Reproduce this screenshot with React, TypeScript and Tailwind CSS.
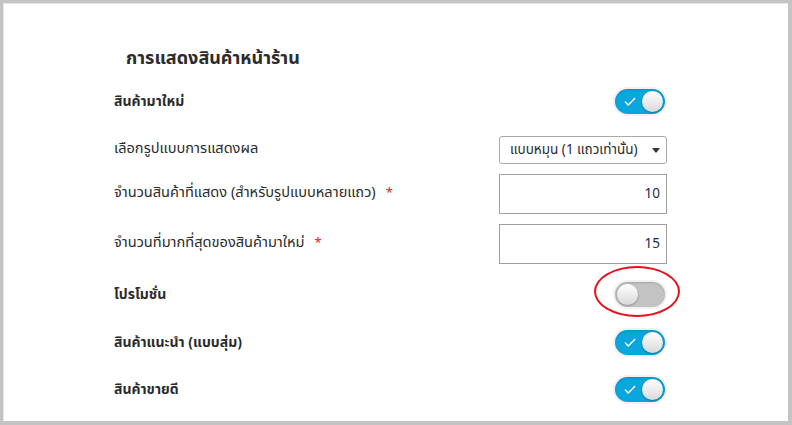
import { useState } from 'react';
import { Check } from 'lucide-react';

function Toggle({ on, circled = false }: { on: boolean; circled?: boolean }) {
  return (
    <div className="relative">
      {circled && (
        <div className="pointer-events-none absolute left-[-19px] top-[-14px] h-[51px] w-[86px] rounded-[50%] border-[2.5px] border-[#e8101a]" />
      )}
      <div className="rounded-full bg-[#f1f1f1] p-[2px]">
        <div
          className={`relative h-[25px] w-[50px] rounded-full shadow-[inset_0_1px_2px_rgba(0,0,0,0.15)] ${
            on ? 'bg-[#0aa6dc]' : 'bg-[#c3c3c3]'
          }`}
        >
          {on && <Check size={14} strokeWidth={2.5} className="absolute left-[8px] top-[6px] text-white" />}
          <div
            className={`absolute top-[2px] h-[21px] w-[21px] rounded-full bg-gradient-to-b from-[#ffffff] to-[#d9d9d9] shadow-[0_1px_2px_rgba(0,0,0,0.3)] ${
              on ? 'left-[27px]' : 'left-[2px]'
            }`}
          />
        </div>
      </div>
    </div>
  );
}

function Row({ label, bold = false, required = false, children, h }: { label: string; bold?: boolean; required?: boolean; children: React.ReactNode; h: string }) {
  return (
    <div className={`flex items-center justify-between ${h}`}>
      <div className={`text-[#2b2b2b] ${bold ? 'text-[14px] font-bold' : 'text-[14.6px]'}`}>
        {label}
        {required && <span className="ml-[10px] text-[13px] text-[#e02020]">*</span>}
      </div>
      {children}
    </div>
  );
}

export default function App() {
  const [rotate] = useState('แบบหมุน (1 แถวเท่านั้น)');

  return (
    <div
      className="h-[425px] w-[792px] bg-[#c4c4c4] pb-[4px] pl-[3px] pr-[4px] pt-[3px]"
      style={{ fontFamily: 'Tahoma, "Noto Sans Thai", "Noto Sans", sans-serif' }}
    >
      <div className="h-full overflow-hidden border-l border-t border-[#e6e6e6] bg-white pl-[110px] pr-[121px] pt-[43px]">
        <h1 className="ml-[12px] h-[24px] text-[18px] font-bold leading-[24px] text-[#2b2b2b]">การแสดงสินค้าหน้าร้าน</h1>

        <div className="mt-[12px] flex flex-col">
          <Row label="สินค้ามาใหม่" bold h="h-[36px]">
            <Toggle on />
          </Row>

          <Row label="เลือกรูปแบบการแสดงผล" h="mt-[13px] h-[36px]">
            <div className="flex h-[28px] w-[168px] items-center justify-between rounded-[3px] border border-[#a9a9a9] pl-[10px] pr-[6px] text-[13.5px] text-[#2b2b2b]">
              <span>{rotate}</span>
              <svg width="8" height="5" viewBox="0 0 8 5">
                <path d="M0 0h8L4 5z" fill="#333" />
              </svg>
            </div>
          </Row>

          <Row label="จำนวนสินค้าที่แสดง (สำหรับรูปแบบหลายแถว)" required h="mt-[6px] h-[40px]">
            <div className="flex h-[40px] w-[168px] items-center justify-end border border-[#a0a0a0] pr-[6px] text-[13.5px] text-[#1f2a44]">
              10
            </div>
          </Row>

          <Row label="จำนวนที่มากที่สุดของสินค้ามาใหม่" required h="mt-[10px] h-[40px]">
            <div className="flex h-[40px] w-[168px] items-center justify-end border border-[#a0a0a0] pr-[6px] text-[13.5px] text-[#1f2a44]">
              15
            </div>
          </Row>

          <Row label="โปรโมชั่น" bold h="mt-[12px] h-[36px]">
            <Toggle on={false} circled />
          </Row>

          <Row label="สินค้าแนะนำ (แบบสุ่ม)" bold h="mt-[12px] h-[36px]">
            <Toggle on />
          </Row>

          <Row label="สินค้าขายดี" bold h="mt-[11px] h-[36px]">
            <Toggle on />
          </Row>

          <Row label="" h="mt-[11px] h-[36px]">
            <Toggle on />
          </Row>
        </div>
      </div>
    </div>
  );
}
